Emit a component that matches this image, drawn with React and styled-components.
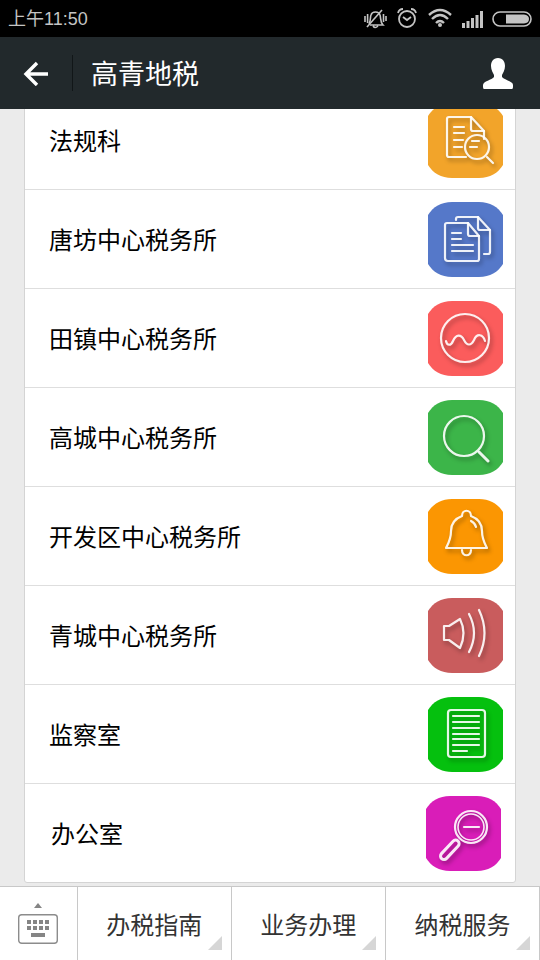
import React from "react";
import styled, { createGlobalStyle } from "styled-components";

const departments = [
  { name: "法规科", color: "#f2a42a", icon: "docSearch" },
  { name: "唐坊中心税务所", color: "#5578c9", icon: "copies" },
  { name: "田镇中心税务所", color: "#fb5c5c", icon: "wave" },
  { name: "高城中心税务所", color: "#3cb549", icon: "search" },
  { name: "开发区中心税务所", color: "#fb9602", icon: "bell" },
  { name: "青城中心税务所", color: "#c95c5d", icon: "speaker" },
  { name: "监察室", color: "#05c00e", icon: "page" },
  { name: "办公室", color: "#d91db8", icon: "zoomOut", inset: true }
];

const menus = ["办税指南", "业务办理", "纳税服务"];

const glyphs = {
  docSearch: (
    <>
      <path d="M38 54H21Q19 54 19 52V16Q19 14 21 14H43L56 28V36" />
      <path d="M43 14V26Q43 28 45 28H56" />
      <path d="M26 24H36M26 30H36M26 37H35M26 44H34M44 38H51M42 44H49" />
      <circle cx="49" cy="44" r="12" />
      <path d="M59 54L65 60" />
    </>
  ),
  copies: (
    <>
      <path d="M28 18V17Q28 15 30 15H50L62 28V50Q62 52 60 52H56" />
      <path d="M50 15V26Q50 28 52 28H62" />
      <path d="M19 21H40L51 34V57Q51 59 49 59H20Q17 59 17 56V23Q17 21 19 21Z" />
      <path d="M40 21V32Q40 34 42 34H51" />
      <path d="M24 31H33M24 37H33M24 43H45M24 49H45" />
    </>
  ),
  wave: (
    <>
      <circle cx="37" cy="37" r="24" />
      <path d="M18 40C19 45 23 45 25 40C28 33 33 33 36 39C39 45 43 45 46 39C49 32 55 33 57 40" />
    </>
  ),
  search: (
    <>
      <circle cx="36" cy="36" r="20" />
      <path d="M51 52L60 61" strokeWidth="3" />
    </>
  ),
  bell: (
    <>
      <path d="M34 17C34 10 43 10 43 17C51 20 54 26 54 32C54 40 56 43 59 49H18C21 43 23 40 23 32C23 26 26 20 34 17Z" />
      <path d="M34 51C34 58 43 58 43 51" />
      <path d="M43 22Q47 24 48 28" />
    </>
  ),
  speaker: (
    <>
      <path d="M16 28H21L32 21Q39 35 32 50L21 42H16Z" />
      <path d="M41 16Q51 35 41 54" />
      <path d="M51 12Q62 35 51 58" />
    </>
  ),
  page: (
    <>
      <rect x="20" y="13" width="37" height="47" rx="3" />
      <path d="M25 19H51M25 25H51M25 31H51M25 37H51M25 42H51M25 48H51M25 54H39" />
    </>
  ),
  zoomOut: (
    <>
      <circle cx="45" cy="31" r="16" />
      <circle cx="45" cy="31" r="13" strokeWidth="1.6" />
      <path d="M38 31H53" />
      <rect x="-3.5" y="0" width="7" height="24" rx="3.5" transform="translate(32 45) rotate(43)" strokeWidth="3" />
    </>
  )
};

const Tile = ({ color, icon }) => (
  <TileSvg viewBox="0 0 75 75" aria-hidden="true">
    <path
      fill={color}
      d="M0 13C5 5 13 0 24 0H51C62 0 70 5 75 13V62C70 70 62 75 51 75H24C13 75 5 70 0 62Z"
    />
    <Lines>{glyphs[icon]}</Lines>
  </TileSvg>
);

const StatusIcons = () => (
  <StatusSvg viewBox="0 0 168 24" aria-hidden="true">
    {/* Muted bell */}
    <g fill="none" stroke="#c4c4c4" strokeWidth="1.6">
      <path d="M5 17C7 14 6 10 7 8C8 4 15 4 16 8C17 11 16 15 19 18H6M9 19Q11 22 14 19" />
      <path d="M3 20L18 3" />
      <path d="M1 9V15M3.6 7V16M19.5 7V15M22 9V14" />
    </g>
    {/* Alarm */}
    <g fill="none" stroke="#c4c4c4" strokeWidth="1.8">
      <circle cx="43" cy="12" r="8" />
      <path d="M39 10L43 13L47 10" />
      <path d="M34 6Q35 2 39 2M47 2Q51 2 52 6" />
    </g>
    {/* Wifi */}
    <g fill="none" stroke="#c4c4c4" strokeWidth="2.4">
      <path d="M65 8Q76 -2 87 8" />
      <path d="M68 12Q76 4 84 12" />
      <path d="M72 16Q76 12 80 16" />
    </g>
    <circle cx="76" cy="18" r="2" fill="#c4c4c4" />
    {/* Signal */}
    <path
      d="M98 16h3v5h-3zM102.500 14h3v7h-3zM107 11h3v10h-3zM111.500 8h3v13h-3zM116 4h3v17h-3z"
      fill="#c4c4c4"
    />
    {/* Battery */}
    <rect x="129" y="5" width="38" height="14" rx="7" fill="none" stroke="#c4c4c4" strokeWidth="1.6" />
    <path d="M142 7.500H160Q165 8 165 12T160 16.500H142Z" fill="#c4c4c4" />
  </StatusSvg>
);

const App = () => (
  <>
    <GlobalStyle />
    <Screen>
      <StatusBar>
        <span>上午11:50</span>
        <StatusIcons />
      </StatusBar>
      <Header>
        <BackButton type="button" aria-label="返回">
          <svg width="26" height="26" viewBox="0 0 26 26" fill="none" stroke="#fff" strokeWidth="3.4">
            <path d="M25 14H3M14 3L3 14L14 25" />
          </svg>
        </BackButton>
        <Title>高青地税</Title>
        <ProfileButton type="button" aria-label="资料">
          <svg width="30" height="32" viewBox="0 0 30 32" fill="#fff">
            <path d="M15 1C20 1 22 5 22 9C22 13 20 16 19 18V20C21 23 30 24 30 28V30Q30 32 29 32H1Q0 32 0 30V28C0 24 9 23 11 20V18C10 16 8 13 8 9C8 5 10 1 15 1Z" />
          </svg>
        </ProfileButton>
      </Header>
      <Content>
        <List>
          {departments.map(item => (
            <Item key={item.name}>
              <Row href="#" $inset={item.inset}>
                {item.name}
                <Tile color={item.color} icon={item.icon} />
              </Row>
            </Item>
          ))}
        </List>
      </Content>
      <MenuBar>
        <KeyboardButton type="button" aria-label="键盘">
          <svg width="40" height="42" viewBox="0 0 40 42" fill="#858585">
            <path d="M16 5L20 0L24 5Z" />
            <rect x="0.700" y="11.700" width="38.600" height="28.600" rx="3" fill="none" stroke="#8c8c8c" strokeWidth="1.400" />
            <path d="M9 17h4v4h-4zM15 17h4v4h-4zM21 17h4v4h-4zM27 17h4v4h-4zM9 23h4v4h-4zM15 23h4v4h-4zM21 23h4v4h-4zM27 23h4v4h-4zM13 30h14v4h-14z" />
          </svg>
        </KeyboardButton>
        {menus.map(menu => (
          <MenuButton type="button" key={menu}>
            {menu}
          </MenuButton>
        ))}
      </MenuBar>
    </Screen>
  </>
);

export default App;

const GlobalStyle = createGlobalStyle`
  * {
    box-sizing: border-box;
  }
  body {
    margin: 0;
    background: #ebebeb;
    font-family: "Noto Sans CJK SC", sans-serif;
  }
  button {
    border: 0;
    padding: 0;
    background: none;
    font-family: inherit;
    cursor: pointer;
  }
`;

const Screen = styled.div`
  display: flex;
  flex-direction: column;
  height: 100vh;
  overflow: hidden;
`;

const StatusBar = styled.div`
  display: flex;
  flex: none;
  align-items: center;
  justify-content: space-between;
  height: 37px;
  padding: 0 8px;
  background: #000;
  color: #c4c4c4;
  font-family: "Liberation Sans", "Noto Sans CJK SC", sans-serif;
  font-size: 18px;
  line-height: 36px;
`;

const StatusSvg = styled.svg`
  width: 168px;
  height: 24px;
`;

const Header = styled.header`
  display: flex;
  flex: none;
  align-items: center;
  height: 72px;
  background: #22292c;
  color: #fff;
`;

const BackButton = styled.button`
  display: flex;
  align-items: center;
  justify-content: center;
  width: 73px;
  height: 36px;
  border-right: 1px solid #111618;
`;

const Title = styled.h1`
  flex: 1;
  margin: 0;
  padding-left: 18px;
  font-size: 27px;
  font-weight: 400;
  line-height: 36px;
`;

const ProfileButton = styled.button`
  display: flex;
  align-items: center;
  justify-content: center;
  width: 84px;
  height: 72px;
`;

const Content = styled.main`
  display: flex;
  flex: 1;
  flex-direction: column;
  justify-content: flex-end;
  min-height: 0;
  padding: 0 24px 3px;
  overflow: hidden;
`;

const List = styled.ul`
  flex: none;
  margin: 0;
  padding: 0;
  list-style: none;
  background: #fff;
  border: 1px solid #d4d4d4;
  border-radius: 3px;
`;

const Item = styled.li`
  & + & {
    border-top: 1px solid #dedede;
  }
`;

const Row = styled.a`
  display: flex;
  align-items: center;
  justify-content: space-between;
  height: 98px;
  padding: ${props => (props.$inset ? "0 14px 0 26px" : "0 12px 0 24px")};
  color: #000;
  font-size: 24px;
  line-height: 36px;
  text-decoration: none;
`;

const TileSvg = styled.svg`
  flex: none;
  width: 75px;
  height: 75px;
`;

const Lines = styled.g`
  fill: none;
  stroke: #fff;
  stroke-opacity: 0.9;
  stroke-width: 2.2;
  stroke-linecap: round;
  stroke-linejoin: round;
  filter: drop-shadow(2px 3px 2px rgba(0, 0, 0, 0.35));
`;

const MenuBar = styled.nav`
  display: flex;
  flex: none;
  height: 74px;
  background: #fff;
  border-top: 1px solid #c8c8c8;
`;

const KeyboardButton = styled.button`
  display: flex;
  flex: 1;
  align-items: center;
  justify-content: center;
  border-right: 1px solid #c8c8c8;
`;

const MenuButton = styled.button`
  position: relative;
  flex: 2;
  border-right: 1px solid #c8c8c8;
  color: #333;
  font-size: 24px;
  line-height: 36px;
  &::after {
    content: "";
    position: absolute;
    right: 9px;
    bottom: 10px;
    border-bottom: 14px solid #d6d6d6;
    border-left: 14px solid transparent;
  }
`;
